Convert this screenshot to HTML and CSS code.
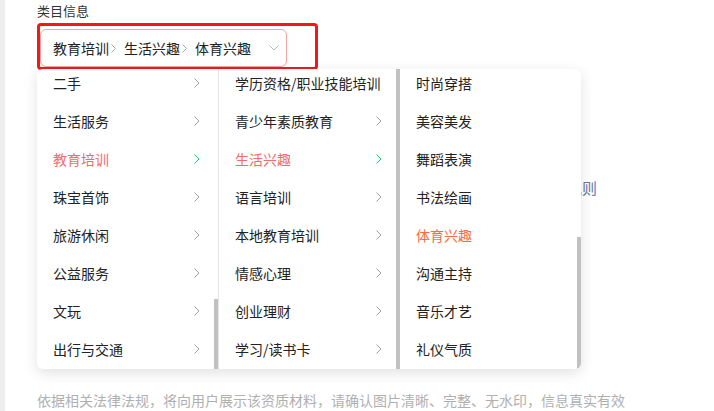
FILE: index.html
```html
<!DOCTYPE html>
<html lang="zh-CN">
<head>
    <meta charset="UTF-8">
    <meta name="viewport" content="width=device-width, initial-scale=1.0">
    <title>类目信息</title>
    <link rel="stylesheet" href="styles.css">
</head>
<body>
    <div class="page">
        <!-- Category label -->
        <div class="field-label">类目信息</div>

        <!-- Cascader (red mark box) -->
        <div class="picker-mark">
            <div class="picker-input">
                <span class="seg">教育培训</span>
                <svg class="sep" width="5" height="9" viewBox="0 0 5 9"><polyline points="0.5,0.5 4.5,4.5 0.5,8.5" fill="none" stroke="#aaa" stroke-width="1"/></svg>
                <span class="seg">生活兴趣</span>
                <svg class="sep" width="5" height="9" viewBox="0 0 5 9"><polyline points="0.5,0.5 4.5,4.5 0.5,8.5" fill="none" stroke="#aaa" stroke-width="1"/></svg>
                <span class="seg">体育兴趣</span>
                <svg class="caret" width="10" height="6" viewBox="0 0 10 6"><polyline points="0.5,0.5 5,5 9.5,0.5" fill="none" stroke="#bbb" stroke-width="1"/></svg>
            </div>

            <!-- Dropdown panel -->
            <div class="cascader-menu">
                <div class="col">
                    <ul class="list">
                        <li class="item"><span>二手</span><svg class="arrow" width="6" height="10" viewBox="0 0 6 10"><polyline points="0.5,0.5 5,5 0.5,9.5" fill="none" stroke="currentColor" stroke-width="1"/></svg></li>
                        <li class="item"><span>生活服务</span><svg class="arrow" width="6" height="10" viewBox="0 0 6 10"><polyline points="0.5,0.5 5,5 0.5,9.5" fill="none" stroke="currentColor" stroke-width="1"/></svg></li>
                        <li class="item active"><span>教育培训</span><svg class="arrow" width="6" height="10" viewBox="0 0 6 10"><polyline points="0.5,0.5 5,5 0.5,9.5" fill="none" stroke="currentColor" stroke-width="1"/></svg></li>
                        <li class="item"><span>珠宝首饰</span><svg class="arrow" width="6" height="10" viewBox="0 0 6 10"><polyline points="0.5,0.5 5,5 0.5,9.5" fill="none" stroke="currentColor" stroke-width="1"/></svg></li>
                        <li class="item"><span>旅游休闲</span><svg class="arrow" width="6" height="10" viewBox="0 0 6 10"><polyline points="0.5,0.5 5,5 0.5,9.5" fill="none" stroke="currentColor" stroke-width="1"/></svg></li>
                        <li class="item"><span>公益服务</span><svg class="arrow" width="6" height="10" viewBox="0 0 6 10"><polyline points="0.5,0.5 5,5 0.5,9.5" fill="none" stroke="currentColor" stroke-width="1"/></svg></li>
                        <li class="item"><span>文玩</span><svg class="arrow" width="6" height="10" viewBox="0 0 6 10"><polyline points="0.5,0.5 5,5 0.5,9.5" fill="none" stroke="currentColor" stroke-width="1"/></svg></li>
                        <li class="item"><span>出行与交通</span><svg class="arrow" width="6" height="10" viewBox="0 0 6 10"><polyline points="0.5,0.5 5,5 0.5,9.5" fill="none" stroke="currentColor" stroke-width="1"/></svg></li>
                    </ul>
                    <div class="bar"><div class="thumb thumb-low"></div></div>
                </div>

                <div class="col col-mid">
                    <ul class="list">
                        <li class="item"><span class="clip">学历资格/职业技能培训</span></li>
                        <li class="item"><span>青少年素质教育</span><svg class="arrow" width="6" height="10" viewBox="0 0 6 10"><polyline points="0.5,0.5 5,5 0.5,9.5" fill="none" stroke="currentColor" stroke-width="1"/></svg></li>
                        <li class="item active"><span>生活兴趣</span><svg class="arrow" width="6" height="10" viewBox="0 0 6 10"><polyline points="0.5,0.5 5,5 0.5,9.5" fill="none" stroke="currentColor" stroke-width="1"/></svg></li>
                        <li class="item"><span>语言培训</span><svg class="arrow" width="6" height="10" viewBox="0 0 6 10"><polyline points="0.5,0.5 5,5 0.5,9.5" fill="none" stroke="currentColor" stroke-width="1"/></svg></li>
                        <li class="item"><span>本地教育培训</span><svg class="arrow" width="6" height="10" viewBox="0 0 6 10"><polyline points="0.5,0.5 5,5 0.5,9.5" fill="none" stroke="currentColor" stroke-width="1"/></svg></li>
                        <li class="item"><span>情感心理</span><svg class="arrow" width="6" height="10" viewBox="0 0 6 10"><polyline points="0.5,0.5 5,5 0.5,9.5" fill="none" stroke="currentColor" stroke-width="1"/></svg></li>
                        <li class="item"><span>创业理财</span><svg class="arrow" width="6" height="10" viewBox="0 0 6 10"><polyline points="0.5,0.5 5,5 0.5,9.5" fill="none" stroke="currentColor" stroke-width="1"/></svg></li>
                        <li class="item"><span>学习/读书卡</span><svg class="arrow" width="6" height="10" viewBox="0 0 6 10"><polyline points="0.5,0.5 5,5 0.5,9.5" fill="none" stroke="currentColor" stroke-width="1"/></svg></li>
                    </ul>
                    <div class="bar"><div class="thumb thumb-full"></div></div>
                </div>

                <div class="col col-last">
                    <ul class="list">
                        <li class="item"><span>时尚穿搭</span></li>
                        <li class="item"><span>美容美发</span></li>
                        <li class="item"><span>舞蹈表演</span></li>
                        <li class="item"><span>书法绘画</span></li>
                        <li class="item picked"><span>体育兴趣</span></li>
                        <li class="item"><span>沟通主持</span></li>
                        <li class="item"><span>音乐才艺</span></li>
                        <li class="item"><span>礼仪气质</span></li>
                    </ul>
                    <div class="bar"><div class="thumb thumb-mid"></div></div>
                </div>
            </div>
        </div>

        <!-- Hint under the picker (mostly covered by the menu) -->
        <div class="rule-line">查看资质规则</div>

        <p class="notice">依据相关法律法规，将向用户展示该资质材料，请确认图片清晰、完整、无水印，信息真实有效</p>
    </div>
</body>
</html>
```

FILE: styles.css
```css
/* General Reset */
* {
    margin: 0;
    padding: 0;
    box-sizing: border-box;
}

body {
    font-family: "Noto Sans CJK SC", "Noto Sans", sans-serif;
    background: #fff;
    color: #222;
    overflow: hidden;
}

/* Page area */
.page {
    min-height: 100vh;
    border-left: 5px solid #eeeeee;
    padding: 3px 0 0 32px;
}

.field-label {
    font-size: 13px;
    line-height: 15px;
    color: #333;
    margin-bottom: 5px;
}

/* Red annotation box round the input */
.picker-mark {
    position: relative;
    width: 281px;
    height: 47px;
    border: 3px solid #f3191b;
    border-radius: 4px;
    padding: 3px 28px 0 0;
}

.picker-input {
    display: flex;
    align-items: center;
    height: 38px;
    border: 1px solid #f2a7a4;
    border-radius: 6px;
    padding: 0 7px 0 12px;
    font-size: 14px;
    color: #222;
    white-space: nowrap;
}

.sep {
    margin: 0 8px 0 2px;
}

.caret {
    margin-left: auto;
}

/* Dropdown menu */
.cascader-menu {
    position: absolute;
    top: calc(100% + 2px);
    left: -3px;
    display: flex;
    height: 300px;
    background: #fff;
    border-radius: 6px;
    box-shadow: 0 4px 14px rgba(0, 0, 0, 0.12);
    overflow: hidden;
    z-index: 2;
}

.col {
    display: flex;
    width: 181px;
    height: 100%;
}

.col-mid {
    width: 182px;
    border-left: 1px solid #e6e6e6;
}

.list {
    flex: 1;
    list-style: none;
    margin-top: -5px;
    overflow: hidden;
}

.item {
    display: flex;
    align-items: center;
    justify-content: space-between;
    height: 38px;
    padding: 0 14px 0 16px;
    font-size: 14px;
    color: #222;
    white-space: nowrap;
}

.arrow {
    color: #a0a0a0;
}

.item.active {
    color: #f26b6b;
}

.item.active .arrow {
    color: #2fbf71;
}

.item.picked {
    color: #fb6a40;
}

.clip {
    display: block;
    max-width: 146px;
    overflow: hidden;
}

/* Scrollbars */
.bar {
    width: 4px;
    display: flex;
    flex-direction: column;
}

.thumb {
    background: #c1c1c1;
}

.thumb-low {
    margin-top: auto;
    height: 70px;
}

.thumb-full {
    height: 100%;
}

.thumb-mid {
    margin-top: auto;
    height: 132px;
}

/* Text under the picker */
.rule-line {
    width: 560px;
    margin-top: 108px;
    text-align: right;
    font-size: 15px;
    line-height: 20px;
    color: #6877a6;
}

.notice {
    margin-top: 192px;
    font-size: 14px;
    line-height: 20px;
    color: #b0b0b0;
    white-space: nowrap;
}
```
